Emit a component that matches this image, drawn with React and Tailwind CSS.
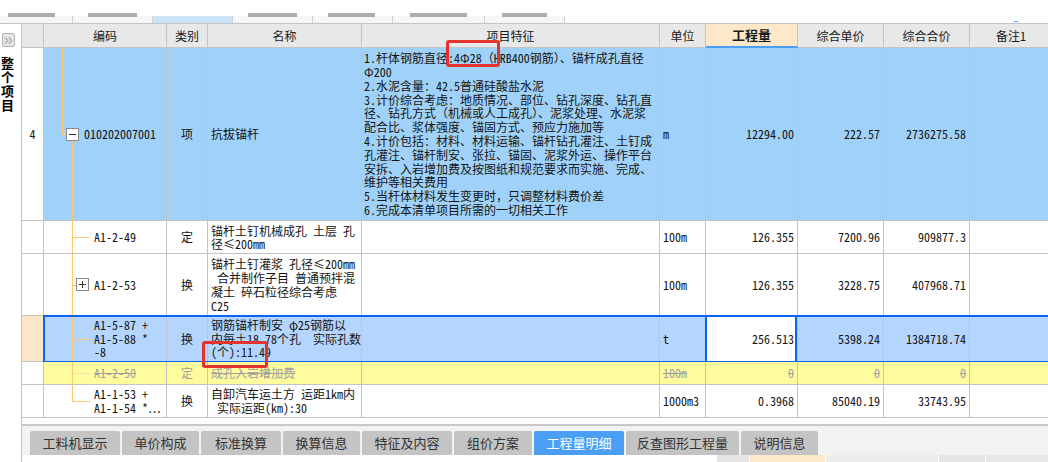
import React from "react";

const FONT = "font-['Noto_Sans_Mono_CJK_SC','Noto_Sans_CJK_SC',sans-serif]";
const W = [
  "w-[22px]",
  "w-[123px]",
  "w-[41px]",
  "w-[154px]",
  "w-[298px]",
  "w-[46px]",
  "w-[92px]",
  "w-[86px]",
  "w-[86px]",
  "w-[100px]",
];
const base =
  "shrink-0 box-border border-r border-b border-[#c4c4c4] relative flex items-center overflow-hidden";

function Cell({ i, className = "", children }) {
  return <div className={`${base} ${W[i]} ${className}`}>{children}</div>;
}

const LINE = "absolute bg-[#ffc870]";

function Box({ plus, className }) {
  return (
    <span
      className={`absolute w-[13px] h-[13px] box-border border border-[#8a8a8a] bg-white flex items-center justify-center ${className}`}
    >
      <span className="relative w-[7px] h-[7px] flex items-center justify-center">
        <span className="absolute w-[7px] h-px bg-[#333]" />
        {plus && <span className="absolute w-px h-[7px] bg-[#333]" />}
      </span>
    </span>
  );
}

function Lines({ lines, className = "" }) {
  return (
    <div className={`flex flex-col ${className}`}>
      {lines.map((l, k) => (
        <div key={k} className="whitespace-pre">
          {l}
        </div>
      ))}
    </div>
  );
}

const feature = [
  "1.杆体钢筋直径:4Φ28（HRB400钢筋）、锚杆成孔直径",
  "Φ200",
  "2.水泥含量：42.5普通硅酸盐水泥",
  "3.计价综合考虑：地质情况、部位、钻孔深度、钻孔直",
  "径、钻孔方式（机械或人工成孔）、泥浆处理、水泥浆",
  "配合比、浆体强度、锚固方式、预应力施加等",
  "4.计价包括：材料、材料运输、锚杆钻孔灌注、土钉成",
  "孔灌注、锚杆制安、张拉、锚固、泥浆外运、操作平台",
  "安拆、入岩增加费及按图纸和规范要求而实施、完成、",
  "维护等相关费用",
  "5.当杆体材料发生变更时，只调整材料费价差",
  "6.完成本清单项目所需的一切相关工作",
];

function TopStrip() {
  const tabs = [
    { w: "w-[73px]", s: "w-[47px] ml-[8px]" },
    { w: "w-[80px]", s: "w-[49px] ml-[15px]" },
    { w: "w-[80px]", s: "", blue: true },
    { w: "w-[80px]", s: "w-[49px] ml-[15px]" },
    { w: "w-[80px]", s: "w-[47px] ml-[15px]" },
    { w: "w-[92px]", s: "w-[57px] ml-[17px]" },
    { w: "w-[80px]", s: "w-[45px] ml-[17px]" },
  ];
  return (
    <div className="h-[24px] flex flex-col bg-white border-b border-[#c4c4c4] box-border">
      <div className="h-[13px]" />
      <div className="h-[3px] flex">
        {tabs.map((t, k) => (
          <div key={k} className={`${t.w} shrink-0`}>
            {t.s && <div className={`h-[4px] bg-[#8c8c8c] opacity-70 ${t.s}`} />}
          </div>
        ))}
      </div>
      <div className="h-[7px] flex">
        {tabs.map((t, k) => (
          <div
            key={k}
            className={`${t.w} shrink-0 box-border border-r border-[#d2d2d2] ${
              t.blue ? "bg-[#cce4f7]" : "bg-[#f6f6f6]"
            }`}
          />
        ))}
        <div className="flex-1 flex justify-end pr-[30px]">
          <div className="w-[4px] h-[1px] mt-[5px] bg-[#4a9ff5]" />
        </div>
      </div>
    </div>
  );
}

function LeftPanel() {
  return (
    <div className="w-[22px] shrink-0 box-border border-r border-[#c4c4c4] bg-white flex flex-col">
      <div className="mt-[9px] ml-[2px] w-[13px] h-[14px] box-border border border-[#b4b4b4] bg-[#e6e6e6] rounded-[2px] flex items-center justify-center">
        <svg width="9" height="7" viewBox="0 0 9 7">
          <path d="M1 0.5 L3.8 3.5 L1 6.5 M5 0.5 L7.8 3.5 L5 6.5" stroke="#7a7a7a" strokeWidth="1" fill="none" />
        </svg>
      </div>
      <div className="mt-[9px] ml-[1px] flex flex-col text-[13px] font-bold text-black">
        <span className="h-[14px] leading-[14px]">整</span>
        <span className="h-[14px] leading-[14px]">个</span>
        <span className="h-[14px] leading-[14px]">项</span>
        <span className="h-[14px] leading-[14px]">目</span>
      </div>
    </div>
  );
}

function Header() {
  const hb = "bg-[#e8e8e8] justify-center text-[#1a1a1a]";
  return (
    <div className="flex h-[24px]">
      <Cell i={0} className={hb} />
      <Cell i={1} className={hb}>编码</Cell>
      <Cell i={2} className={hb}>类别</Cell>
      <Cell i={3} className={hb}>名称</Cell>
      <Cell i={4} className={hb}>项目特征</Cell>
      <Cell i={5} className={hb}>单位</Cell>
      <Cell i={6} className="bg-[#fde8c9] justify-center font-bold text-[13px] text-[#1a1a1a] border-b-2 border-b-[#4a9ff5]">
        工程量
      </Cell>
      <Cell i={7} className={hb}>综合单价</Cell>
      <Cell i={8} className={hb}>综合合价</Cell>
      <Cell i={9} className={`${hb} justify-start pl-[26px]`}>备注1</Cell>
    </div>
  );
}

const NUM = "justify-end pr-[3px]";

function Table() {
  const blue = "bg-[#a0d2f9]";
  const sel = "bg-[#b4d5fd]";
  const yel = "bg-[#fffc9e]";
  const gray = "text-[#a0a0a0] line-through";
  return (
    <div className="flex flex-col">
      <Header />
      {/* Row 1 */}
      <div className="flex h-[173px]">
        <Cell i={0} className="bg-white justify-center">4</Cell>
        <Cell i={1} className={`${blue} pl-[40px]`}>
          <span className={`${LINE} left-[18px] top-0 w-px h-[86px]`} />
          <span className={`${LINE} left-[18px] top-[86px] w-[4px] h-px`} />
          <Box className="left-[22px] top-[80px]" />
          <span className={`${LINE} left-[28px] top-[93px] bottom-0 w-px`} />
          010202007001
        </Cell>
        <Cell i={2} className={`${blue} justify-center`}>项</Cell>
        <Cell i={3} className={`${blue} pl-[3px]`}>抗拔锚杆</Cell>
        <Cell i={4} className={`${blue} pl-[2px] leading-[13.8px]`}>
          <Lines lines={feature} />
        </Cell>
        <Cell i={5} className={`${blue} pl-[3px]`}>m</Cell>
        <Cell i={6} className={`${blue} ${NUM}`}>12294.00</Cell>
        <Cell i={7} className={`${blue} ${NUM}`}>222.57</Cell>
        <Cell i={8} className={`${blue} ${NUM}`}>2736275.58</Cell>
        <Cell i={9} className={blue} />
      </div>
      {/* Row 2 */}
      <div className="flex h-[33px]">
        <Cell i={0} className="bg-white" />
        <Cell i={1} className="bg-white pl-[50px]">
          <span className={`${LINE} left-[28px] top-0 bottom-0 w-px`} />
          <span className={`${LINE} left-[28px] top-1/2 w-[18px] h-px`} />
          A1-2-49
        </Cell>
        <Cell i={2} className="bg-white justify-center">定</Cell>
        <Cell i={3} className="bg-white pl-[3px] leading-[13px]">
          <Lines lines={["锚杆土钉机械成孔 土层 孔", "径≤200mm"]} />
        </Cell>
        <Cell i={4} className="bg-white" />
        <Cell i={5} className="bg-white pl-[3px]">100m</Cell>
        <Cell i={6} className={`bg-white ${NUM}`}>126.355</Cell>
        <Cell i={7} className={`bg-white ${NUM}`}>7200.96</Cell>
        <Cell i={8} className={`bg-white ${NUM}`}>909877.3</Cell>
        <Cell i={9} className="bg-white" />
      </div>
      {/* Row 3 */}
      <div className="flex h-[62px]">
        <Cell i={0} className="bg-white" />
        <Cell i={1} className="bg-white pl-[50px]">
          <span className={`${LINE} left-[28px] top-0 bottom-0 w-px`} />
          <span className={`${LINE} left-[28px] top-1/2 w-[4px] h-px`} />
          <Box plus className="left-[32px] top-[24px]" />
          A1-2-53
        </Cell>
        <Cell i={2} className="bg-white justify-center">换</Cell>
        <Cell i={3} className="bg-white pl-[3px] leading-[14px]">
          <Lines lines={["锚杆土钉灌浆 孔径≤200mm", " 合并制作子目 普通预拌混", "凝土 碎石粒径综合考虑", "C25"]} />
        </Cell>
        <Cell i={4} className="bg-white" />
        <Cell i={5} className="bg-white pl-[3px]">100m</Cell>
        <Cell i={6} className={`bg-white ${NUM}`}>126.355</Cell>
        <Cell i={7} className={`bg-white ${NUM}`}>3228.75</Cell>
        <Cell i={8} className={`bg-white ${NUM}`}>407968.71</Cell>
        <Cell i={9} className="bg-white" />
      </div>
      {/* Row 4 (selected) */}
      <div className="flex h-[46px] relative">
        <Cell i={0} className="bg-[#fde6c8]" />
        <Cell i={1} className={`${sel} pl-[50px] leading-[13.5px]`}>
          <span className={`${LINE} left-[28px] top-0 bottom-0 w-px`} />
          <span className={`${LINE} left-[28px] top-1/2 w-[18px] h-px`} />
          <Lines lines={["A1-5-87 +", "A1-5-88 *", "-8"]} />
        </Cell>
        <Cell i={2} className={`${sel} justify-center`}>换</Cell>
        <Cell i={3} className={`${sel} pl-[3px] leading-[13.5px]`}>
          <Lines lines={["钢筋锚杆制安 φ25钢筋以", "内每±18.78个孔  实际孔数", "(个):11.49"]} />
        </Cell>
        <Cell i={4} className={sel} />
        <Cell i={5} className={`${sel} pl-[3px]`}>t</Cell>
        <Cell i={6} className={`bg-white ${NUM}`}>256.513</Cell>
        <Cell i={7} className={`${sel} ${NUM}`}>5398.24</Cell>
        <Cell i={8} className={`${sel} ${NUM}`}>1384718.74</Cell>
        <Cell i={9} className={sel} />
        <div className="absolute left-[21px] top-[-1px] right-[-10px] h-[48px] border-2 border-[#0a64f0] pointer-events-none" />
        <div className="absolute left-[683px] top-[-1px] w-[92px] h-[48px] border-2 border-[#0a64f0] pointer-events-none" />
      </div>
      {/* Row 5 (yellow) */}
      <div className="flex h-[23px]">
        <Cell i={0} className="bg-white" />
        <Cell i={1} className={`${yel} pl-[50px]`}>
          <span className={`${LINE} left-[28px] top-0 bottom-0 w-px`} />
          <span className="absolute bg-[#ffd9a0] left-[28px] top-1/2 w-[18px] h-px" />
          <span className={gray}>A1-2-50</span>
        </Cell>
        <Cell i={2} className={`${yel} justify-center text-[#a0a0a0]`}>定</Cell>
        <Cell i={3} className={`${yel} pl-[3px]`}>
          <span className={gray}>成孔入岩增加费</span>
        </Cell>
        <Cell i={4} className={yel} />
        <Cell i={5} className={`${yel} pl-[3px]`}>
          <span className={gray}>100m</span>
        </Cell>
        <Cell i={6} className={`${yel} ${NUM}`}>
          <span className={gray}>0</span>
        </Cell>
        <Cell i={7} className={`${yel} ${NUM}`}>
          <span className={gray}>0</span>
        </Cell>
        <Cell i={8} className={`${yel} ${NUM}`}>
          <span className={gray}>0</span>
        </Cell>
        <Cell i={9} className={yel} />
      </div>
      {/* Row 6 */}
      <div className="flex h-[33px]">
        <Cell i={0} className="bg-white" />
        <Cell i={1} className="bg-white pl-[50px] leading-[14px]">
          <span className={`${LINE} left-[28px] top-0 h-1/2 w-px`} />
          <span className={`${LINE} left-[28px] top-1/2 w-[18px] h-px`} />
          <Lines lines={["A1-1-53 +", "A1-1-54 *…"]} />
        </Cell>
        <Cell i={2} className="bg-white justify-center">换</Cell>
        <Cell i={3} className="bg-white pl-[3px] leading-[14px]">
          <Lines lines={["自卸汽车运土方 运距1km内", " 实际运距(km):30"]} />
        </Cell>
        <Cell i={4} className="bg-white" />
        <Cell i={5} className="bg-white pl-[3px]">1000m3</Cell>
        <Cell i={6} className={`bg-white ${NUM}`}>0.3968</Cell>
        <Cell i={7} className={`bg-white ${NUM}`}>85040.19</Cell>
        <Cell i={8} className={`bg-white ${NUM}`}>33743.95</Cell>
        <Cell i={9} className="bg-white" />
      </div>
    </div>
  );
}

function BottomTabs() {
  const tabs = [
    ["工料机显示", "w-[90px]"],
    ["单价构成", "w-[77px]"],
    ["标准换算", "w-[80px]"],
    ["换算信息", "w-[77px]"],
    ["特征及内容", "w-[90px]"],
    ["组价方案", "w-[78px]"],
    ["工程量明细", "w-[90px]", true],
    ["反查图形工程量", "w-[113px]"],
    ["说明信息", "w-[77px]"],
  ];
  return (
    <div className="flex flex-col">
      <div className="h-[6px] bg-white" />
      <div className="h-[2px] bg-[#c8c8c8]" />
      <div className="h-[29px] bg-[#f2f2f2] pt-[5px] pl-[8px] flex gap-[2px]">
        {tabs.map(([t, w, active]) => (
          <div
            key={t}
            className={`${w} h-[24px] shrink-0 rounded-t-[2px] flex items-center justify-center text-[13px] ${
              active ? "bg-[#4a9ff5] text-white" : "bg-[#c4c4c4] text-[#333]"
            }`}
          >
            {t}
          </div>
        ))}
      </div>
      <div className="h-[7px] bg-white flex">
        <div className="w-[695px] shrink-0" />
        <div className="w-[33px] shrink-0 bg-[#e4e4e4] border-r border-white" />
        <div className="w-[76px] shrink-0 bg-[#fde8c9] border-r border-white" />
        <div className="w-[113px] shrink-0 bg-[#ececec] border-r border-white" />
        <div className="w-[47px] shrink-0 bg-[#e4e4e4] border-r border-white" />
        <div className="flex-1 bg-[#e8e8e8]" />
      </div>
    </div>
  );
}

export default function App() {
  return (
    <div className={`relative w-[1048px] h-[462px] overflow-hidden bg-white text-[12px] leading-[14px] text-[#141414] ${FONT}`}>
      <TopStrip />
      <div className="flex h-[438px]">
        <LeftPanel />
        <div className="flex-1 flex flex-col overflow-hidden">
          <Table />
          <BottomTabs />
        </div>
      </div>
      <div className="absolute left-[446px] top-[40px] w-[54px] h-[27px] border-[3px] border-[#e5322d] rounded-[3px] pointer-events-none" />
      <div className="absolute left-[202px] top-[341px] w-[66px] h-[27px] border-[3px] border-[#e5322d] rounded-[3px] pointer-events-none" />
    </div>
  );
}
